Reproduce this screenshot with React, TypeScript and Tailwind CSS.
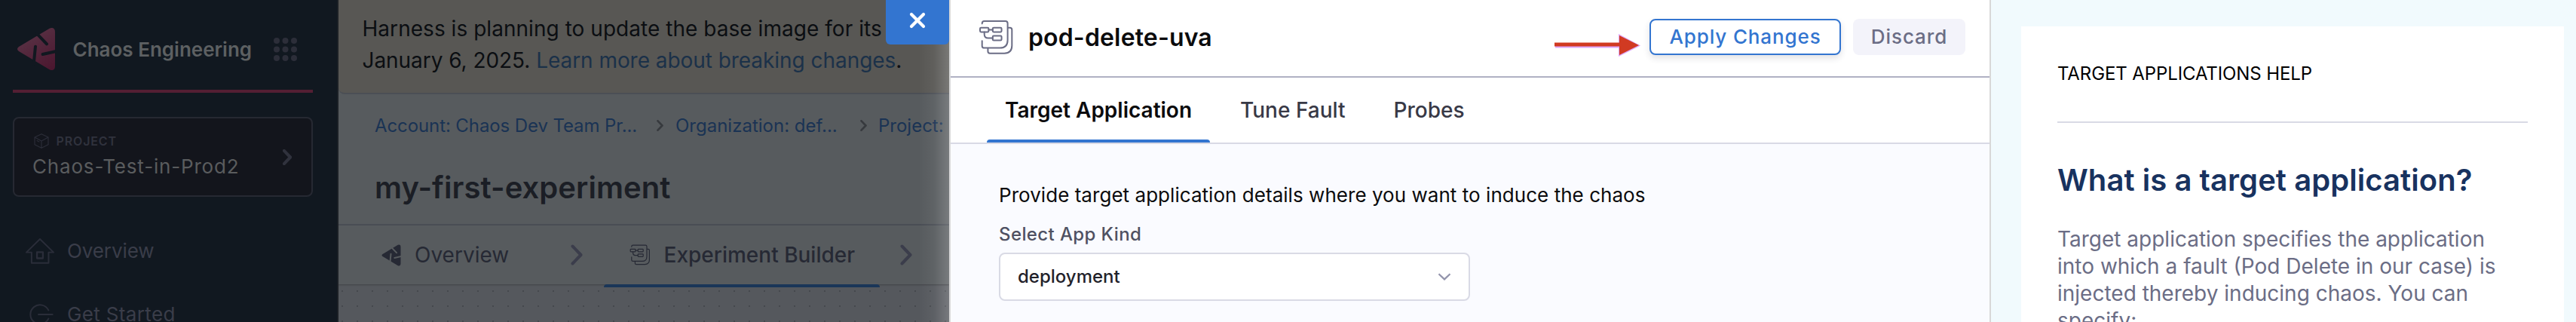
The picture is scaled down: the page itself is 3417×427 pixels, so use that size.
import type { ReactNode } from "react";

function HarnessMark({ className, slit, gradient }: { className: string; slit: string; gradient?: boolean }) {
  return (
    <svg className={className} viewBox="66 108 156 174" fill="none">
      <defs>
        <linearGradient id="mark" x1="100" y1="110" x2="219" y2="282" gradientUnits="userSpaceOnUse">
          <stop offset="0" stopColor="#5a3547" />
          <stop offset="1" stopColor="#4b152e" />
        </linearGradient>
      </defs>
      <path
        d="M75 186 L197 113 Q203 110 208 111 Q219 113 219 127 V263 Q219 277 208 279 Q202 280 197 277 L75 204 Q69 200 69 195 Q69 190 75 186 Z"
        fill={gradient ? "url(#mark)" : "currentColor"}
      />
      <path d="M146 133 L186 175 M141 185 L134 256 M170 216 L232 202" stroke={slit} strokeWidth="12" strokeLinecap="round" />
    </svg>
  );
}

function PipelineIcon({ className }: { className: string }) {
  return (
    <svg className={className} viewBox="24 33 140 140" fill="none" stroke="currentColor" strokeWidth="6" strokeLinecap="round" strokeLinejoin="round">
      <path d="M38 49 Q38 39 47 39 H130 Q139 39 139 48 V114 Q139 145 108 145 H47 Q38 145 38 137 V117" />
      <path d="M61 148 V158 Q61 166 69 166 H126 Q156 166 156 136 V73 Q156 65 148 65 H141" />
      <rect x="30" y="65" width="34" height="17" rx="4" />
      <rect x="80" y="65" width="35" height="17" rx="4" />
      <rect x="80" y="97" width="35" height="18" rx="4" />
      <path d="M64 73.500 H80 M47 82 V91 Q47 106 62 106 H80" />
    </svg>
  );
}

function Chevron({ className, width }: { className: string; width: number }) {
  return (
    <svg className={className} viewBox="0 0 16 28" fill="none" stroke="currentColor" strokeWidth={width} strokeLinecap="round" strokeLinejoin="round">
      <path d="M2.500 2.500 L13.500 14 L2.500 25.500" />
    </svg>
  );
}

function Sidebar() {
  return (
    <aside className="box-border flex h-full w-[449px] shrink-0 flex-col border-r-2 border-[#1c2026] bg-[#111820] pl-[17px]">
      <div className="mt-[11px] flex h-[108px] shrink-0 items-center">
        <HarnessMark className="ml-[5px] h-[58px] w-[52px]" slit="#111820" gradient />
        <span className="ml-[22.500px] w-[266.500px] text-[26px] leading-[31px] font-semibold text-[#5d6062]">Chaos Engineering</span>
        <svg className="h-[31px] w-[31px]" viewBox="0 0 31 31" fill="#2c2e39">
          {[4, 15.500, 27].map((y) => [4, 15.500, 27].map((x) => <circle key={`${x}-${y}`} cx={x} cy={y} r="4" />))}
        </svg>
      </div>
      <div className="h-1 w-[398px] shrink-0 bg-[#541f33]" />
      <div className="mt-8 flex h-[106px] w-[398px] shrink-0 items-center justify-between rounded-lg border-2 border-[#262932] bg-[#13151c] pr-[26px] pl-6">
        <div className="flex flex-col">
          <div className="flex items-center">
            <svg className="ml-[2px] h-5 w-5" viewBox="135 534 60 60" fill="none" stroke="#2c2e39" strokeWidth="3.500" strokeLinejoin="round">
              <path d="M165 536 L192 549 V578 L165 592 L138 578 V549 Z M138 549 L165 564 L192 549 M165 564 V592 M146 562 L157 568" />
            </svg>
            <span className="ml-[9.500px] text-[16px] leading-5 font-semibold tracking-[0.870px] text-[#30323d]">PROJECT</span>
          </div>
          <span className="mt-2 mb-[3px] text-[26px] leading-[31px] tracking-[0.820px] text-[#5a5c5e]">Chaos-Test-in-Prod2</span>
        </div>
        <Chevron className="h-[21px] w-3 text-[#30323d]" width={5.5} />
      </div>
      <div className="mt-14 flex h-[31px] shrink-0 items-center pl-[17px] text-[#3a3d49]">
        <svg className="h-[36px] w-[38px] text-[#2a2d39]" viewBox="26 46 116 108" fill="none" stroke="currentColor" strokeWidth="6" strokeLinecap="round" strokeLinejoin="round">
          <path d="M50 105 H29 L84 51 L139 105 H119 V148 H50 Z" />
          <rect x="72" y="104" width="24" height="25" strokeWidth="7" />
        </svg>
        <span className="ml-[17px] text-[26px] leading-[31px] tracking-[-0.100px]">Overview</span>
      </div>
      <div className="mt-[53px] flex h-[31px] shrink-0 items-center pl-[22px] text-[#3a3d49]">
        <svg className="h-[32px] w-[34px] text-[#2a2d39]" viewBox="43 303 102 96" fill="none" stroke="currentColor" strokeWidth="6" strokeLinecap="round">
          <path d="M119 334 A38 38 0 1 0 119 368 M79 351 H135" />
        </svg>
        <span className="ml-4 text-[26px] leading-[31px] tracking-[0.360px]">Get Started</span>
      </div>
    </aside>
  );
}

function ExperimentPage() {
  return (
    <main className="relative flex h-full w-[810px] shrink-0 flex-col overflow-hidden bg-[#575b5e]">
      <div className="box-border h-[125px] shrink-0 rounded-bl-lg border-b-2 border-[#4b4f55] bg-[#585754] pt-[17px] pl-[31.500px] text-[28px] leading-[42px] whitespace-nowrap text-[#0b0e12]">
        <p className="tracking-[0.039px]">Harness is planning to update the base image for its</p>
        <p className="tracking-[-0.050px]">
          January 6, 2025. <span className="text-[#1b3149]">Learn more about breaking changes</span>.
        </p>
      </div>
      <div className="box-border flex h-[174px] shrink-0 flex-col border-b-2 border-[#4a4e55] pt-[27px] pl-12">
        <nav className="flex items-center text-[24px] leading-[29px] whitespace-nowrap text-[#1a3354]">
          <span className="w-[374px] shrink-0 tracking-[-0.100px]">Account: Chaos Dev Team Pr...</span>
          <Chevron className="h-[15px] w-[9px] shrink-0 text-[#373a3e]" width={5} />
          <span className="ml-4 w-[244.500px] shrink-0">Organization: def...</span>
          <Chevron className="h-[15px] w-[9px] shrink-0 text-[#373a3e]" width={5} />
          <span className="ml-[15.500px] shrink-0">Project:</span>
        </nav>
        <h1 className="mt-[43px] text-[40px] leading-[49px] font-semibold tracking-[0.066px] text-[#1b1e25]">my-first-experiment</h1>
      </div>
      <div className="relative z-10 flex h-[78px] shrink-0 items-center pl-[57px] text-[28px] leading-[34px] whitespace-nowrap text-[#262934] shadow-[0_1px_2px_rgba(0,0,0,0.25)]">
        <HarnessMark className="h-[29px] w-[26px]" slit="#575b5e" />
        <span className="ml-[18px] w-[207px]">Overview</span>
        <Chevron className="h-7 w-4 text-[#3b3d4b]" width={4} />
        <div className="relative ml-7 flex h-full w-[366px] items-center pl-[34px]">
          <PipelineIcon className="h-7 w-7" />
          <span className="ml-[17.500px] font-medium">Experiment Builder</span>
          <div className="absolute top-full left-0 h-1 w-full rounded-t bg-[#1a3658]" />
        </div>
        <Chevron className="ml-[27px] h-7 w-4 text-[#3b3d4b]" width={4} />
      </div>
      <div className="grow bg-[#55585d] bg-[linear-gradient(#55585d_18px,transparent_18px),linear-gradient(90deg,#55585d_18px,transparent_18px),linear-gradient(#45484d,#45484d)] bg-[length:20px_20px] bg-[position:6px_10px]" />
      <div className="absolute top-0 right-0 h-full w-10 bg-linear-to-r from-transparent via-white/5 to-white/20" />
      <button className="absolute top-0 right-0 z-20 flex h-[59px] w-[84px] items-center justify-center rounded-b-md bg-[#3375d0] pb-[5px]">
        <svg className="h-[22px] w-[22px]" viewBox="0 0 22 22" stroke="#fff" strokeWidth="4.200" strokeLinecap="round">
          <path d="M3 3 L19 19 M19 3 L3 19" />
        </svg>
      </button>
    </main>
  );
}

function Tab({ children, active }: { children: ReactNode; active?: boolean }) {
  return (
    <div className="flex h-full flex-col justify-between">
      <span className={active ? "mt-[26px] px-6 font-semibold text-[#0b0b0d]" : "mt-[26px] px-6 font-medium text-[#383946]"}>{children}</span>
      <div className={active ? "h-1 rounded-t bg-[#3375d0]" : "h-1"} />
    </div>
  );
}

function FaultDrawer() {
  return (
    <section className="box-border flex h-full w-[1382px] shrink-0 flex-col border-x-2 border-[#d8d8d8] bg-[#fafbff]">
      <header className="box-border flex h-[103px] shrink-0 items-center border-b-2 border-[#b0b1c3] bg-white pr-8 pb-[3px] pl-[37px]">
        <PipelineIcon className="h-[47px] w-[47px] shrink-0 text-[#6b6d85]" />
        <h2 className="ml-[19px] w-[696px] text-[32px] leading-[39px] font-semibold tracking-[0.150px] text-[#0b0b0d]">pod-delete-uva</h2>
        <svg className="mt-[21px] h-8 w-[118px] shrink-0" viewBox="0 0 118 32">
          <path d="M3 14 H87 V1 L116 16.500 L87 31 V19.500 H3 Z" fill="#dda6fb" />
          <path d="M2 12.500 H88 V3 L114 16 L88 29 V17.500 H2 Z" fill="#d13a22" />
        </svg>
        <button className="ml-[10px] flex h-12 w-[254px] shrink-0 items-center justify-center rounded-lg border-2 border-[#3375d0] bg-white pb-px text-[26px] leading-[31px] font-medium tracking-[0.876px] text-[#3375d0] shadow-[0_4px_8px_rgba(40,41,61,0.14)]">
          Apply Changes
        </button>
        <button className="ml-4 flex h-12 w-[149px] shrink-0 items-center justify-center rounded-lg bg-[#f3f3fa] pb-px text-[26px] leading-[31px] font-medium tracking-[0.900px] text-[#6b6d85]">
          Discard
        </button>
      </header>
      <div className="box-border flex h-[88px] shrink-0 gap-4 border-b-2 border-[#d9dae5] bg-white pl-12 text-[28px] leading-[34px]">
        <Tab active>Target Application</Tab>
        <Tab>Tune Fault</Tab>
        <Tab>Probes</Tab>
      </div>
      <div className="flex flex-col pt-[52px] pl-16">
        <p className="text-[26px] leading-[31px] tracking-[0.042px] text-[#0b0b0d]">
          Provide target application details where you want to induce the chaos
        </p>
        <label className="mt-[22px] text-[24px] leading-[29px] font-medium tracking-[0.390px] text-[#4f5162]">Select App Kind</label>
        <div className="mt-[10px] box-border flex h-16 w-[625px] items-center justify-between rounded-lg border-2 border-[#d9dae5] bg-white pr-[23px] pb-px pl-[23px]">
          <span className="text-[24px] leading-[29px] font-medium text-[#22222a]">deployment</span>
          <svg className="h-[10px] w-[18px]" viewBox="0 0 18 10" fill="none" stroke="#9293ab" strokeWidth="2.200">
            <path d="M1.500 1.200 L9 8.400 L16.500 1.200" />
          </svg>
        </div>
      </div>
    </section>
  );
}

function HelpPanel() {
  return (
    <aside className="h-full grow bg-[#f1fafd] pt-[35px] pr-4 pl-10">
      <div className="h-full bg-white px-12 pt-12">
        <p className="text-[24px] leading-[29px] tracking-[-0.108px] text-black">TARGET APPLICATIONS HELP</p>
        <div className="mt-[49px] h-[2px] bg-[#d9dae5]" />
        <h3 className="mt-[51px] text-[40px] leading-[49px] font-semibold tracking-[0.058px] text-[#18325f]">What is a target application?</h3>
        <p className="mt-9 text-[28px] leading-9 whitespace-nowrap text-[#6b6d85]">
          Target application specifies the application
          <br />
          into which a fault (Pod Delete in our case) is
          <br />
          injected thereby inducing chaos. You can
          <br />
          specify:
        </p>
      </div>
    </aside>
  );
}

export default function App() {
  return (
    <div className="flex h-[427px] w-full overflow-hidden bg-white font-['Inter',sans-serif]">
      <Sidebar />
      <ExperimentPage />
      <FaultDrawer />
      <HelpPanel />
    </div>
  );
}
